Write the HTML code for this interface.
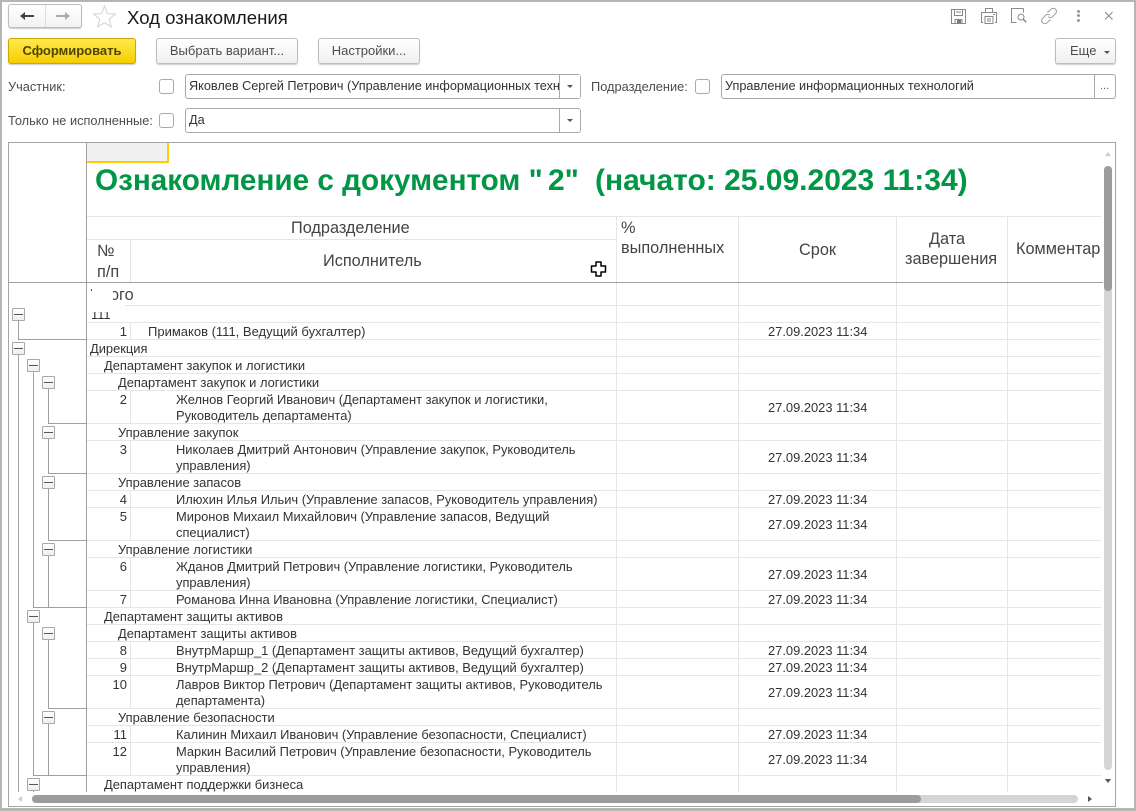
<!DOCTYPE html>
<html lang="ru"><head><meta charset="utf-8"><title>Ход ознакомления</title>
<style>
html,body{margin:0;padding:0;background:#fff}
body{width:1136px;height:811px;position:relative;overflow:hidden;font-family:"Liberation Sans",Arial,sans-serif;font-size:12.9px;color:#333}
div,span{position:absolute;box-sizing:border-box}
.t{white-space:nowrap;line-height:17px;height:17px}
.g{background:#b5b5b5}
.h{height:1px;background:#e6e6e6;left:87px;width:1014px}
.v{width:1px;background:#e6e6e6}
.tl{background:#a0a0a0}
.n{text-align:right;width:40px;left:87px;font-size:13px}
.lab{color:#4d4d4d;line-height:16px;height:16px;white-space:nowrap;font-size:12.8px}
.btn{height:26px;border:1px solid #bdbdbd;border-radius:3px;background:linear-gradient(#fff,#f0f0f0);box-shadow:0 1px 1px #ccc;text-align:center;line-height:24px;color:#4d4d4d;white-space:nowrap}
.inp{height:25px;border:1px solid #a9a9a9;border-radius:3px;background:#fff;line-height:23px;padding-left:3px;color:#333;white-space:nowrap;overflow:hidden;font-size:12.7px}
.cb{width:15px;height:15px;border:1px solid #a9a9a9;border-radius:3px;background:#fff}
.tri{width:0;height:0;border-left:3px solid transparent;border-right:3px solid transparent;border-top:3px solid #555}
.hd{font-size:16.3px;color:#444;line-height:20px;white-space:nowrap}
.d{left:768px;width:110px;white-space:nowrap;line-height:17px;height:17px;color:#333}
.box{width:13px;height:13px;border:1px solid #a8a8a8;border-radius:1px;background:linear-gradient(#fff,#efefef)}
.box:after{content:"";position:absolute;left:1px;right:1px;top:5px;height:1px;background:#555}
</style></head><body>

<div class="g" style="left:0;top:0;width:1136px;height:2px"></div>
<div class="g" style="left:0;top:0;width:2px;height:811px"></div>
<div class="g" style="left:1134px;top:0;width:2px;height:811px"></div>
<div class="g" style="left:0;top:808px;width:1136px;height:3px"></div>

<!-- nav -->
<div style="left:8px;top:4px;width:74px;height:24px;border:1px solid #bdbdbd;border-radius:3px;background:linear-gradient(#fff,#f2f2f2);box-shadow:0 1px 1px #ccc"></div>
<div style="left:45px;top:5px;width:1px;height:22px;background:#ddd"></div>
<svg style="position:absolute;left:19px;top:10px" width="17" height="12"><path d="M1 6L6 2V5H15V7H6V10Z" fill="#444"/></svg>
<svg style="position:absolute;left:55px;top:10px" width="17" height="12"><path d="M15 6L10 2V5H1V7H10V10Z" fill="#aaa"/></svg>
<svg style="position:absolute;left:92px;top:4px" width="25" height="25"><path d="M12.5 2L15.4 9.6L23.5 10L17.2 15.1L19.3 23L12.5 18.6L5.7 23L7.800 15.100L1.5 10L9.600 9.600Z" fill="none" stroke="#d2d2d2"/></svg>
<div class="t" style="left:127px;top:7px;font-size:18.6px;line-height:21px;height:21px;color:#1a1a1a">Ход ознакомления</div>

<!-- toolbar icons -->
<svg style="position:absolute;left:950px;top:7px" width="18" height="18" fill="none" stroke="#8a8a8a"><path d="M1.500 2.500h14v14h-14z"/><path d="M4.500 2.500v6h8v-6M6 5h5M5 16.500v-4h7v4"/><path d="M7 13h4v3H7z" fill="#777" stroke="none"/></svg>
<svg style="position:absolute;left:980px;top:7px" width="18" height="18" fill="none" stroke="#8a8a8a"><path d="M5.500 5.500v-4h7v4M3 15.500H1.500v-10h15v10H15M5 9.500h8v7H5zM7 12h4M7 14h4M13 7.500h2"/></svg>
<svg style="position:absolute;left:1010px;top:7px" width="18" height="18" fill="none" stroke="#8a8a8a"><path d="M13.500 1.500h-12v14h5"/><path d="M13.500 1.500v4"/><circle cx="11" cy="10" r="3"/><path d="M13.200 12.200l3 3" stroke-width="1.500"/></svg>
<svg style="position:absolute;left:1040px;top:7px" width="18" height="18" fill="none" stroke="#999"><path d="M7.500 5.500L11 2.200a3 3 0 0 1 4.500 4.500L12.200 10a3 3 0 0 1-4-0.300"/><path d="M10.500 12.500L7 15.800a3 3 0 0 1-4.500-4.500L5.800 8a3 3 0 0 1 4 0.300"/></svg>
<div style="left:1077px;top:10px;width:3px;height:3px;background:#999;border-radius:2px"></div>
<div style="left:1077px;top:14px;width:3px;height:3px;background:#999;border-radius:2px"></div>
<div style="left:1077px;top:19px;width:3px;height:3px;background:#999;border-radius:2px"></div>
<svg style="position:absolute;left:1104px;top:11px" width="10" height="10"><path d="M1 1L8.500 8.500M8.500 1L1 8.500" stroke="#888" fill="none"/></svg>

<!-- command row -->
<div class="btn" style="left:8px;top:38px;width:128px;border-color:#c9a800;background:linear-gradient(#ffe94d,#f6cd00);font-weight:bold;color:#4d4400;font-size:13px">Сформировать</div>
<div class="btn" style="left:156px;top:38px;width:142px;font-size:13px">Выбрать вариант...</div>
<div class="btn" style="left:318px;top:38px;width:102px;font-size:13px">Настройки...</div>
<div class="btn" style="left:1055px;top:38px;width:61px;font-size:13px;text-align:left;padding-left:14px">Еще</div>
<div class="tri" style="left:1104px;top:51px"></div>

<!-- filters -->
<div class="lab" style="left:8px;top:79px">Участник:</div>
<div class="cb" style="left:159px;top:79px"></div>
<div class="inp" style="left:185px;top:74px;width:396px;padding-right:22px"><span style="position:static">Яковлев Сергей Петрович (Управление информационных техн</span></div>
<div style="left:559px;top:75px;width:1px;height:23px;background:#a9a9a9"></div>
<div style="left:560px;top:75px;width:20px;height:23px;background:#fff"></div>
<div class="tri" style="left:567px;top:85px"></div>
<div class="lab" style="left:591px;top:79px">Подразделение:</div>
<div class="cb" style="left:695px;top:79px"></div>
<div class="inp" style="left:721px;top:74px;width:395px">Управление информационных технологий</div>
<div style="left:1094px;top:75px;width:1px;height:23px;background:#a9a9a9"></div>
<div class="t" style="left:1100px;top:78px;color:#666;font-size:11px">...</div>

<div class="lab" style="left:8px;top:113px">Только не исполненные:</div>
<div class="cb" style="left:159px;top:113px"></div>
<div class="inp" style="left:185px;top:108px;width:396px">Да</div>
<div style="left:559px;top:109px;width:1px;height:23px;background:#a9a9a9"></div>
<div class="tri" style="left:567px;top:119px"></div>

<!-- outer table frame -->
<div style="left:8px;top:142px;width:1108px;height:665px;border:1px solid #a5a5a5"></div>

<!-- selected corner cell -->
<div style="left:87px;top:143px;width:82px;height:20px;background:#f0f0f0;border-right:2px solid #fc0;border-bottom:2px solid #fc0"></div>

<!-- title -->
<div class="t" style="left:95px;top:163px;font-size:29.7px;line-height:36px;height:36px;font-weight:bold;color:#009646">Ознакомление с документом "</div>
<div class="t" style="left:548px;top:163px;font-size:30px;line-height:36px;height:36px;font-weight:bold;color:#009646">2"</div>
<div class="t" style="left:595px;top:163px;font-size:30px;line-height:36px;height:36px;font-weight:bold;color:#009646">(начато: 25.09.2023 11:34)</div>

<!-- grid horizontal -->
<div class="h" style="top:216px"></div>
<div class="h" style="top:239px;width:530px"></div>
<div class="h" style="top:305px"></div><div class="h" style="top:322px"></div><div class="h" style="top:356px"></div><div class="h" style="top:373px"></div><div class="h" style="top:390px"></div><div class="h" style="top:423px"></div><div class="h" style="top:440px"></div><div class="h" style="top:473px"></div><div class="h" style="top:490px"></div><div class="h" style="top:507px"></div><div class="h" style="top:540px"></div><div class="h" style="top:557px"></div><div class="h" style="top:590px"></div><div class="h" style="top:607px"></div><div class="h" style="top:624px"></div><div class="h" style="top:641px"></div><div class="h" style="top:658px"></div><div class="h" style="top:675px"></div><div class="h" style="top:708px"></div><div class="h" style="top:725px"></div><div class="h" style="top:742px"></div><div class="h" style="top:775px"></div><div class="h" style="top:339px"></div>
<!-- grid vertical -->
<div class="v" style="left:130px;top:239px;height:43px"></div>
<div class="v" style="left:616px;top:216px;height:576px"></div>
<div class="v" style="left:738px;top:216px;height:576px"></div>
<div class="v" style="left:896px;top:216px;height:576px"></div>
<div class="v" style="left:1007px;top:216px;height:576px"></div>
<div class="v" style="left:130px;top:322px;height:17px"></div>
<div class="v" style="left:130px;top:390px;height:33px"></div>
<div class="v" style="left:130px;top:440px;height:33px"></div>
<div class="v" style="left:130px;top:490px;height:50px"></div>
<div class="v" style="left:130px;top:557px;height:50px"></div>
<div class="v" style="left:130px;top:641px;height:67px"></div>
<div class="v" style="left:130px;top:725px;height:50px"></div>

<div class="tl" style="left:9px;top:282px;width:1094px;height:1px"></div>
<div class="tl" style="left:86px;top:143px;width:1px;height:649px"></div>

<!-- headers -->
<div class="hd" style="left:291px;top:218px">Подразделение</div>
<div class="hd" style="left:621px;top:218px">%</div>
<div class="hd" style="left:621px;top:238px">выполненных</div>
<div class="hd" style="left:799px;top:240px">Срок</div>
<div class="hd" style="left:929px;top:229px">Дата</div>
<div class="hd" style="left:905px;top:249px">завершения</div>
<div class="hd" style="left:1016px;top:239px">Комментар</div>
<div class="hd" style="left:97px;top:241px">№</div>
<div class="hd" style="left:97px;top:262px">п/п</div>
<div class="hd" style="left:323px;top:251px">Исполнитель</div>

<div class="hd" style="left:91px;top:285px">Итого</div>
<div class="t" style="left:91px;top:306px">111</div>
<div style="left:88px;top:283px;width:25px;height:13px;background:#fff"></div>
<div style="left:92px;top:296px;width:21px;height:8px;background:#fff"></div>
<div style="left:87px;top:304px;width:38px;height:8px;background:#fff"></div>
<div style="left:91px;top:289px;width:1px;height:2px;background:#555"></div>

<!-- rows -->
<div class="t" style="left:90px;top:340px">Дирекция</div>
<div class="t" style="left:104px;top:357px">Департамент закупок и логистики</div>
<div class="t" style="left:118px;top:374px">Департамент закупок и логистики</div>
<div class="t" style="left:118px;top:424px">Управление закупок</div>
<div class="t" style="left:118px;top:474px">Управление запасов</div>
<div class="t" style="left:118px;top:541px">Управление логистики</div>
<div class="t" style="left:104px;top:608px">Департамент защиты активов</div>
<div class="t" style="left:118px;top:625px">Департамент защиты активов</div>
<div class="t" style="left:118px;top:709px">Управление безопасности</div>
<div class="t" style="left:104px;top:776px">Департамент поддержки бизнеса</div>

<div class="t n" style="top:323px">1</div><div class="t" style="left:148px;top:323px;font-size:13px">Примаков (111, Ведущий бухгалтер)</div><div class="d" style="top:323px">27.09.2023 11:34</div>
<div class="t n" style="top:391px">2</div><div class="t" style="left:176px;top:391px">Желнов Георгий Иванович (Департамент закупок и логистики,</div><div class="t" style="left:176px;top:407px">Руководитель департамента)</div><div class="d" style="top:399px">27.09.2023 11:34</div>
<div class="t n" style="top:441px">3</div><div class="t" style="left:176px;top:441px">Николаев Дмитрий Антонович (Управление закупок, Руководитель</div><div class="t" style="left:176px;top:457px">управления)</div><div class="d" style="top:449px">27.09.2023 11:34</div>
<div class="t n" style="top:491px">4</div><div class="t" style="left:176px;top:491px">Илюхин Илья Ильич (Управление запасов, Руководитель управления)</div><div class="d" style="top:491px">27.09.2023 11:34</div>
<div class="t n" style="top:508px">5</div><div class="t" style="left:176px;top:508px">Миронов Михаил Михайлович (Управление запасов, Ведущий</div><div class="t" style="left:176px;top:524px">специалист)</div><div class="d" style="top:516px">27.09.2023 11:34</div>
<div class="t n" style="top:558px">6</div><div class="t" style="left:176px;top:558px">Жданов Дмитрий Петрович (Управление логистики, Руководитель</div><div class="t" style="left:176px;top:574px">управления)</div><div class="d" style="top:566px">27.09.2023 11:34</div>
<div class="t n" style="top:591px">7</div><div class="t" style="left:176px;top:591px">Романова Инна Ивановна (Управление логистики, Специалист)</div><div class="d" style="top:591px">27.09.2023 11:34</div>
<div class="t n" style="top:642px">8</div><div class="t" style="left:176px;top:642px">ВнутрМаршр_1 (Департамент защиты активов, Ведущий бухгалтер)</div><div class="d" style="top:642px">27.09.2023 11:34</div>
<div class="t n" style="top:659px">9</div><div class="t" style="left:176px;top:659px">ВнутрМаршр_2 (Департамент защиты активов, Ведущий бухгалтер)</div><div class="d" style="top:659px">27.09.2023 11:34</div>
<div class="t n" style="top:676px">10</div><div class="t" style="left:176px;top:676px">Лавров Виктор Петрович (Департамент защиты активов, Руководитель</div><div class="t" style="left:176px;top:692px">департамента)</div><div class="d" style="top:684px">27.09.2023 11:34</div>
<div class="t n" style="top:726px">11</div><div class="t" style="left:176px;top:726px">Калинин Михаил Иванович (Управление безопасности, Специалист)</div><div class="d" style="top:726px">27.09.2023 11:34</div>
<div class="t n" style="top:743px">12</div><div class="t" style="left:176px;top:743px">Маркин Василий Петрович (Управление безопасности, Руководитель</div><div class="t" style="left:176px;top:759px">управления)</div><div class="d" style="top:751px">27.09.2023 11:34</div>

<!-- tree lines -->
<div class="tl" style="left:18px;top:320px;width:1px;height:20px"></div><div class="tl" style="left:18px;top:339px;width:68px;height:1px"></div>
<div class="tl" style="left:18px;top:354px;width:1px;height:438px"></div>
<div class="tl" style="left:33px;top:371px;width:1px;height:237px"></div><div class="tl" style="left:33px;top:607px;width:53px;height:1px"></div>
<div class="tl" style="left:33px;top:622px;width:1px;height:154px"></div><div class="tl" style="left:33px;top:775px;width:53px;height:1px"></div>
<div class="tl" style="left:33px;top:790px;width:1px;height:2px"></div>
<div class="tl" style="left:48px;top:388px;width:1px;height:36px"></div><div class="tl" style="left:48px;top:423px;width:38px;height:1px"></div>
<div class="tl" style="left:48px;top:438px;width:1px;height:36px"></div><div class="tl" style="left:48px;top:473px;width:38px;height:1px"></div>
<div class="tl" style="left:48px;top:488px;width:1px;height:53px"></div><div class="tl" style="left:48px;top:540px;width:38px;height:1px"></div>
<div class="tl" style="left:48px;top:555px;width:1px;height:52px"></div>
<div class="tl" style="left:48px;top:639px;width:1px;height:70px"></div><div class="tl" style="left:48px;top:708px;width:38px;height:1px"></div>
<div class="tl" style="left:48px;top:723px;width:1px;height:52px"></div>

<!-- tree boxes -->
<div class="box" style="left:12px;top:308px"></div>
<div class="box" style="left:12px;top:342px"></div>
<div class="box" style="left:27px;top:359px"></div>
<div class="box" style="left:42px;top:376px"></div>
<div class="box" style="left:42px;top:426px"></div>
<div class="box" style="left:42px;top:476px"></div>
<div class="box" style="left:42px;top:543px"></div>
<div class="box" style="left:27px;top:610px"></div>
<div class="box" style="left:42px;top:627px"></div>
<div class="box" style="left:42px;top:711px"></div>
<div class="box" style="left:27px;top:778px"></div>

<!-- cursor -->
<svg style="position:absolute;left:590px;top:261px" width="17" height="16"><path d="M6 1h5v4h4.500v6H11v4H6v-4H1.500V5H6z" fill="#fff" stroke="#000" stroke-width="1.500" stroke-linejoin="round"/></svg>

<!-- scrollbars -->
<div style="left:1104px;top:166px;width:8px;height:604px;background:#d5d5d5;border-radius:4px"></div>
<div style="left:1104px;top:166px;width:8px;height:125px;background:#9c9c9c;border-radius:4px"></div>
<div style="left:1105px;top:152px;width:0;height:0;border-left:3px solid transparent;border-right:3px solid transparent;border-bottom:4px solid #ccc"></div>
<div style="left:1105px;top:779px;width:0;height:0;border-left:3px solid transparent;border-right:3px solid transparent;border-top:4px solid #555"></div>
<div style="left:32px;top:795px;width:1046px;height:8px;background:#d5d5d5;border-radius:4px"></div>
<div style="left:32px;top:795px;width:889px;height:8px;background:#9c9c9c;border-radius:4px"></div>
<div style="left:18px;top:796px;width:0;height:0;border-top:3px solid transparent;border-bottom:3px solid transparent;border-right:4px solid #ccc"></div>
<div style="left:1088px;top:796px;width:0;height:0;border-top:3px solid transparent;border-bottom:3px solid transparent;border-left:4px solid #555"></div>
</body></html>
